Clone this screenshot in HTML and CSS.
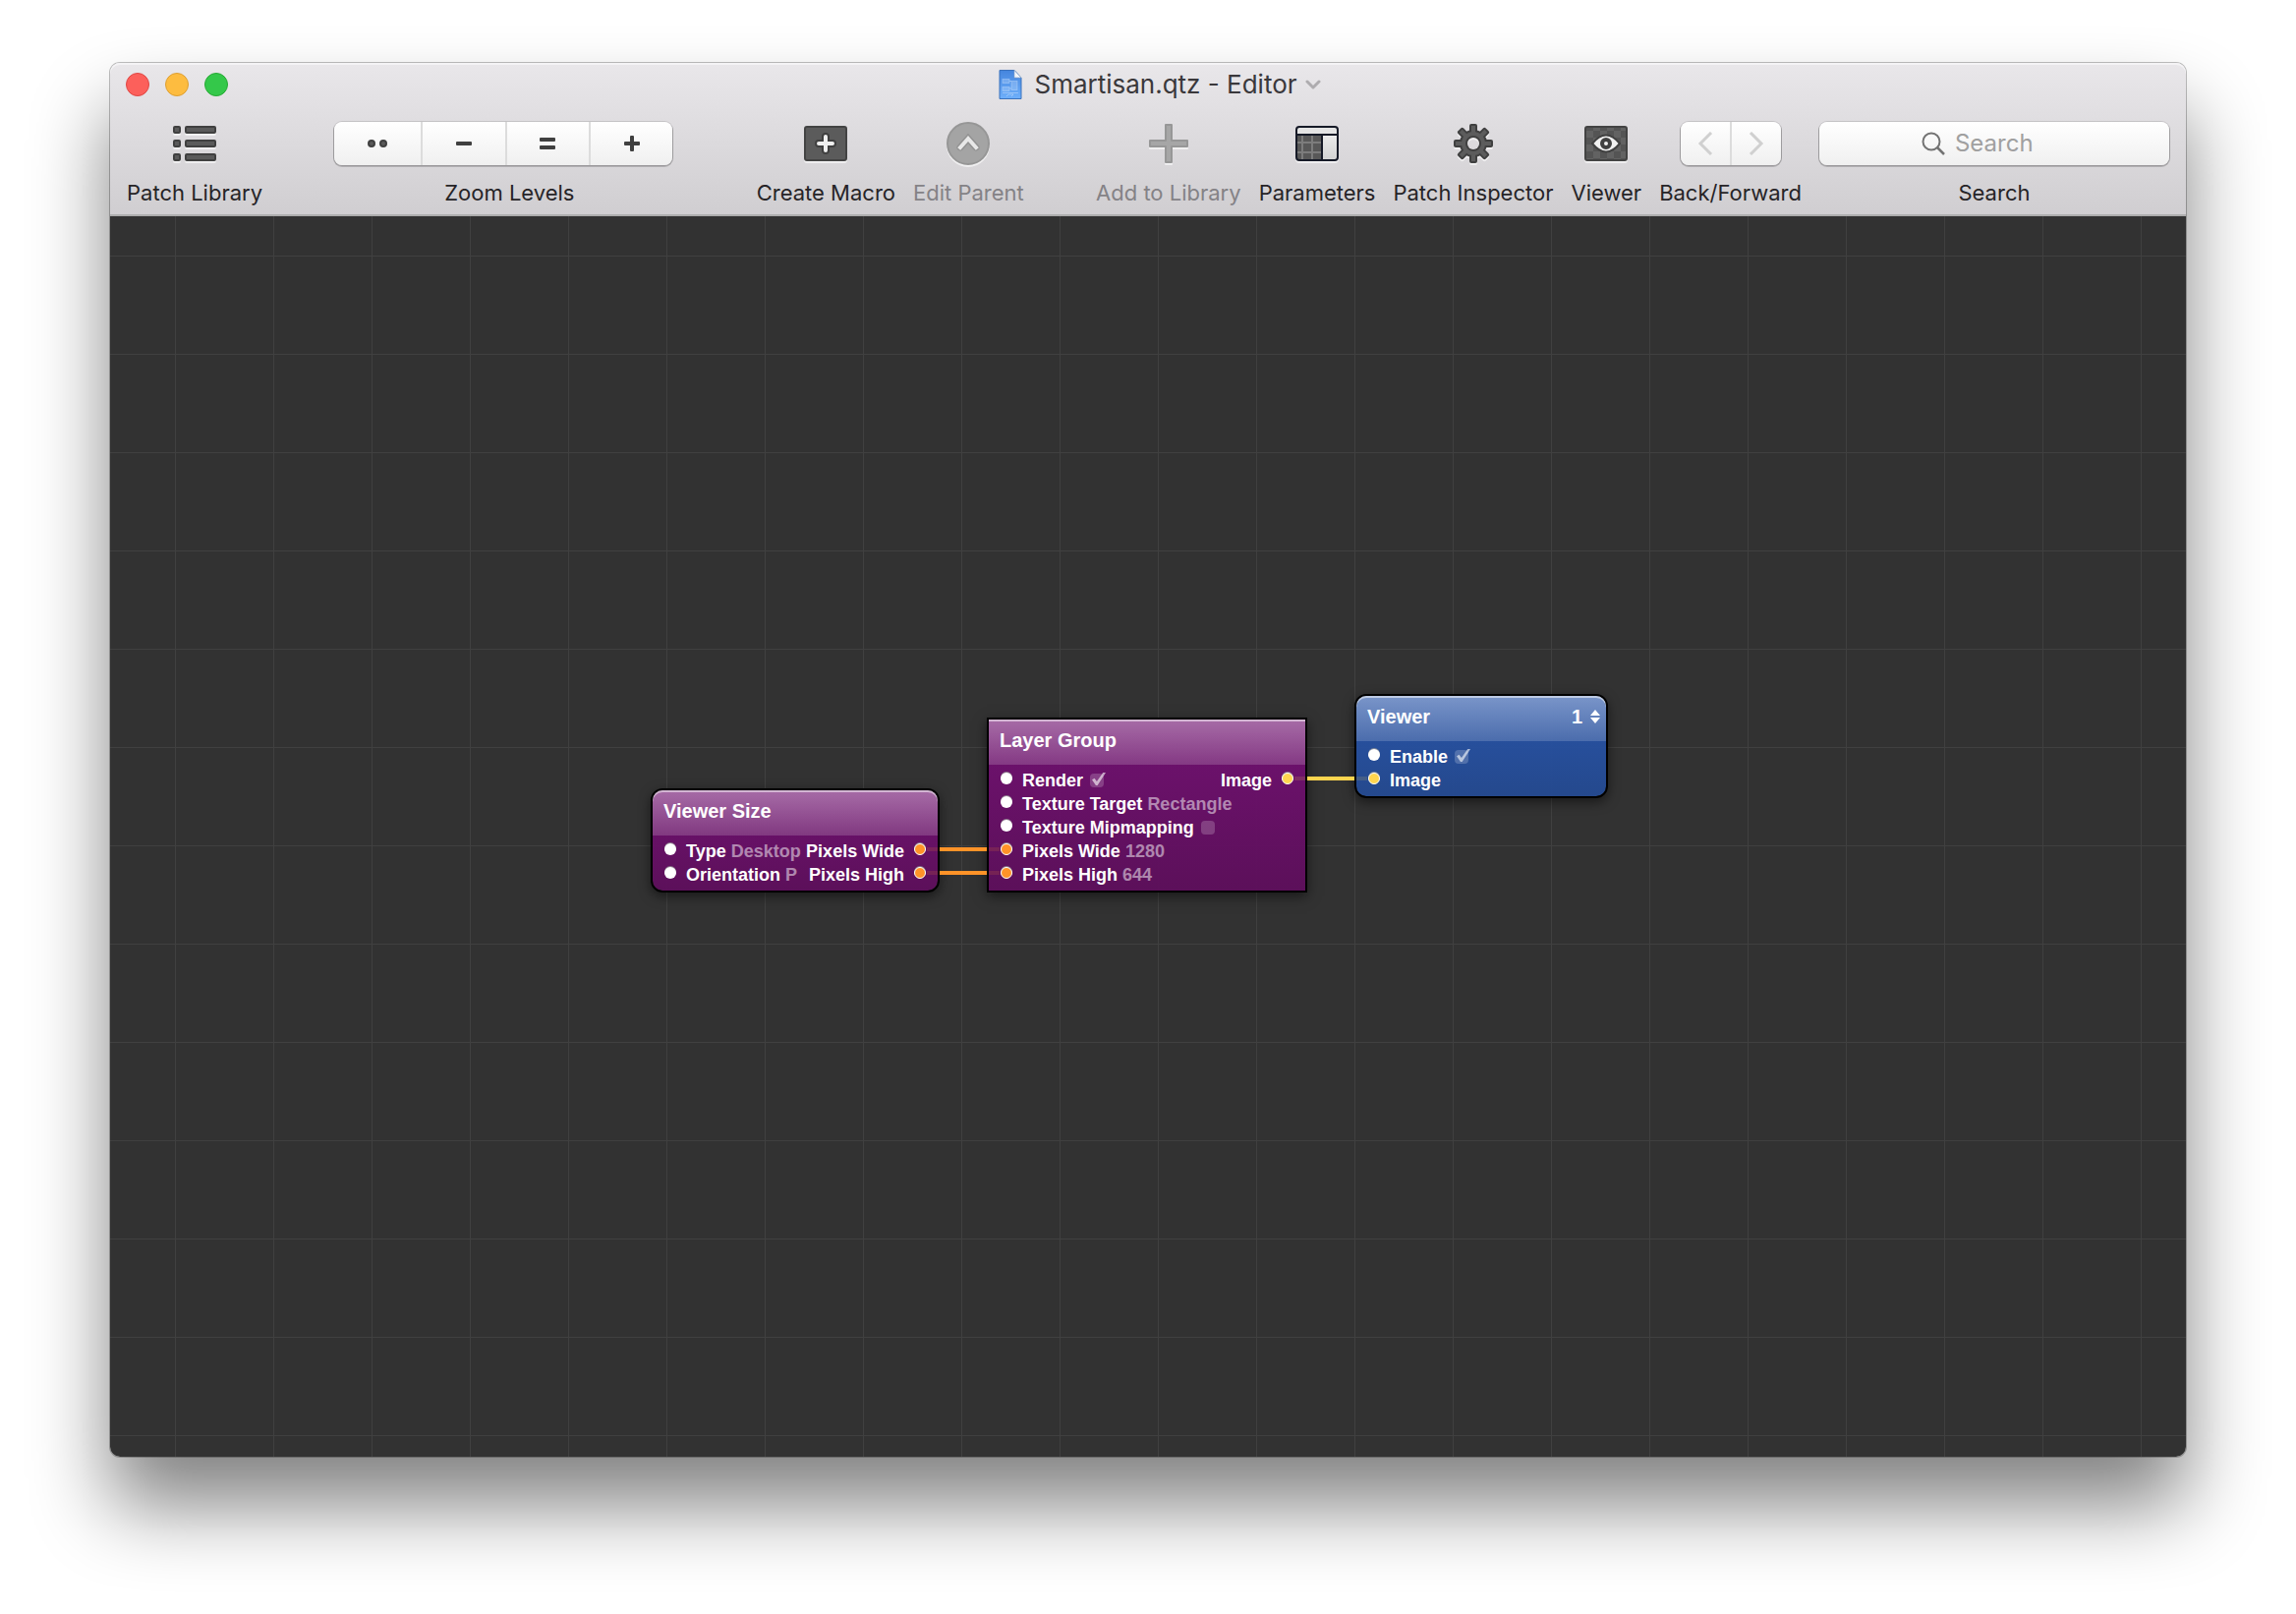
FILE: index.html
```html
<!DOCTYPE html>
<html lang="en">
<head>
<meta charset="utf-8">
<title>Smartisan.qtz - Editor</title>
<link rel="stylesheet" href="styles.css">
</head>
<body>
<main class="window">
  <header class="chrome">
    <div class="titlebar">
      <div class="lights">
        <button class="light light-close" aria-label="Close"></button>
        <button class="light light-min" aria-label="Minimize"></button>
        <button class="light light-max" aria-label="Zoom window"></button>
      </div>
      <h1 class="title">
        <svg width="24" height="32" viewBox="0 0 24 32" aria-hidden="true">
          <defs><linearGradient id="doc" x1="0" y1="0" x2="0" y2="1"><stop offset="0" stop-color="#4585de"/><stop offset="1" stop-color="#6fb0fb"/></linearGradient></defs>
          <path d="M1 1.500H16L23 9V30.500H1Z" fill="url(#doc)" stroke="#3b72bd"/>
          <path d="M16 1.500L23 9H16Z" fill="#f2f6fb" stroke="#8aa3c4" stroke-width=".6"/>
          <g fill="#b9d7fb" fill-opacity=".35" stroke="#cfe3fc" stroke-opacity=".45" stroke-width=".8"><rect x="4" y="10.500" width="7" height="4"/><rect x="4" y="18.500" width="7" height="4"/><rect x="13" y="12.500" width="6" height="9"/></g>
          <path d="M11 12.500H13M11 20H13M8 28L10 26H15L13 28M4 24.500H20" stroke="#c5defc" stroke-opacity=".5" fill="none"/>
        </svg>
        <span>Smartisan.qtz - Editor</span>
      </h1>
      <button class="title-menu" aria-label="Document menu">
        <svg width="16" height="12" viewBox="0 0 16 12"><path d="M2 3L8 9L14 3" fill="none" stroke="#aeacaf" stroke-width="3" stroke-linecap="round" stroke-linejoin="round"/></svg>
      </button>
    </div>

    <div class="toolbar">
      <button class="tool">
        <svg class="icon" width="44" height="44" viewBox="0 0 44 44" aria-hidden="true">
          <g fill="#5a5a5a" stroke="#404040" stroke-width="2"><rect x="1" y="5" width="6" height="6" rx="1"/><rect x="13" y="5" width="30" height="6" rx="1"/><rect x="1" y="19" width="6" height="6" rx="1"/><rect x="13" y="19" width="30" height="6" rx="1"/><rect x="1" y="33" width="6" height="6" rx="1"/><rect x="13" y="33" width="30" height="6" rx="1"/></g>
        </svg>
        <span>Patch Library</span>
      </button>

      <div class="tool tool-zoom spaced" role="group" aria-labelledby="zoom-label">
        <div class="segmented zoom">
          <button aria-label="Zoom to fit"><svg width="24" height="16" viewBox="0 0 24 16"><g fill="#5a5a5a" stroke="#404040" stroke-width="2"><circle cx="6" cy="8" r="3"/><circle cx="18" cy="8" r="3"/></g></svg></button>
          <button aria-label="Zoom out"><svg width="16" height="16" viewBox="0 0 16 16"><rect y="6" width="16" height="4" rx="1" fill="#404040"/></svg></button>
          <button aria-label="Actual size"><svg width="16" height="16" viewBox="0 0 16 16"><path d="M1 2h14a1 1 0 0 1 1 1v2a1 1 0 0 1-1 1H1a1 1 0 0 1-1-1V3a1 1 0 0 1 1-1zM1 10h14a1 1 0 0 1 1 1v2a1 1 0 0 1-1 1H1a1 1 0 0 1-1-1v-2a1 1 0 0 1 1-1z" fill="#404040"/></svg></button>
          <button aria-label="Zoom in"><svg width="16" height="16" viewBox="0 0 16 16"><rect y="6" width="16" height="4" rx="1" fill="#404040"/><rect x="6" width="4" height="16" rx="1" fill="#404040"/></svg></button>
        </div>
        <span id="zoom-label">Zoom Levels</span>
      </div>

      <button class="tool spaced">
        <svg class="icon" width="44" height="44" viewBox="0 0 44 44" aria-hidden="true">
          <rect x="1" y="5" width="42" height="34" rx="2" fill="#5b5b5b" stroke="#434343" stroke-width="2"/>
          <path d="M22 15V29M15 22H29" stroke="#404040" stroke-width="8" stroke-linecap="round"/>
          <path d="M22 15V29M15 22H29" stroke="#f0f0f0" stroke-width="4" stroke-linecap="round"/>
        </svg>
        <span>Create Macro</span>
      </button>
      <button class="tool" disabled>
        <svg class="icon" width="44" height="44" viewBox="0 0 44 44" aria-hidden="true">
          <circle cx="22" cy="22" r="21" fill="#a4a4a4" stroke="#969696" stroke-width="2"/>
          <path d="M14 26L22 17L30 26" fill="none" stroke="#929292" stroke-width="7" stroke-linecap="round"/>
          <path d="M14 26L22 17L30 26" fill="none" stroke="#e8e8e8" stroke-width="4" stroke-linecap="square"/>
        </svg>
        <span>Edit Parent</span>
      </button>

      <button class="tool spaced" disabled>
        <svg class="icon" width="40" height="44" viewBox="0 0 40 44" aria-hidden="true">
          <path d="M17 3H23V19H39V25H23V41H17V25H1V19H17Z" fill="#a6a6a6" stroke="#979797" stroke-width="2" stroke-linejoin="round"/>
        </svg>
        <span>Add to Library</span>
      </button>
      <button class="tool">
        <svg class="icon" width="44" height="44" viewBox="0 0 44 44" aria-hidden="true">
          <defs><linearGradient id="panel" x1="0" y1="0" x2="0" y2="1"><stop offset="0" stop-color="#f4f4f4"/><stop offset="1" stop-color="#d2d2d2"/></linearGradient></defs>
          <rect x="1" y="5" width="42" height="34" rx="3" fill="url(#panel)"/>
          <rect x="2" y="14" width="24" height="24" fill="#585858"/>
          <path d="M7 14V38M17 14V38M2 21H26M2 31H26" stroke="#7c7c7c" stroke-width="2"/>
          <rect x="2" y="6" width="40" height="7" fill="#e4e4e4"/>
          <path d="M2 13H42M27 13V38" stroke="#161a27" stroke-width="2"/>
          <rect x="1" y="5" width="42" height="34" rx="3" fill="none" stroke="#161a27" stroke-width="2"/>
        </svg>
        <span>Parameters</span>
      </button>
      <button class="tool">
        <svg class="icon" width="40" height="44" viewBox="-20 -22 40 44" aria-hidden="true">
          <defs>
            <g id="teeth"><rect x="-4" y="-20" width="8" height="40" rx="2"/><rect x="-20" y="-4" width="40" height="8" rx="2"/></g>
            <g id="teeth-in"><rect x="-2" y="-18" width="4" height="36"/><rect x="-18" y="-2" width="36" height="4"/></g>
            <mask id="hole"><rect x="-20" y="-22" width="40" height="44" fill="#fff"/><circle r="6" fill="#000"/></mask>
          </defs>
          <g mask="url(#hole)">
            <g fill="#404040"><use href="#teeth"/><use href="#teeth" transform="rotate(45)"/><circle r="14"/></g>
            <g fill="#5c5c5c"><use href="#teeth-in"/><use href="#teeth-in" transform="rotate(45)"/><circle r="12"/></g>
            <circle r="7" fill="none" stroke="#404040" stroke-width="2"/>
          </g>
        </svg>
        <span>Patch Inspector</span>
      </button>
      <button class="tool">
        <svg class="icon" width="44" height="44" viewBox="0 0 44 44" aria-hidden="true">
          <defs><pattern id="check" x="2" y="2" width="14" height="14" patternUnits="userSpaceOnUse"><rect width="14" height="14" fill="#626262"/><path d="M0 0h7v7H0zM7 7h7v7H7z" fill="#545454"/></pattern></defs>
          <rect x="1" y="5" width="42" height="34" rx="2" fill="url(#check)" stroke="#434343" stroke-width="2"/>
          <path d="M8 22Q22 5 36 22Q22 39 8 22Z" fill="#f0f0f0" stroke="#404040" stroke-width="2"/>
          <circle cx="22" cy="22" r="4" fill="#f0f0f0" stroke="#404040" stroke-width="4"/>
        </svg>
        <span>Viewer</span>
      </button>
      <div class="tool" role="group" aria-labelledby="nav-label">
        <div class="segmented nav">
          <button aria-label="Back" disabled><svg width="16" height="24" viewBox="0 0 16 24"><path d="M14 1L3 12L14 23" fill="none" stroke="#d0d0d0" stroke-width="3"/></svg></button>
          <button aria-label="Forward" disabled><svg width="16" height="24" viewBox="0 0 16 24"><path d="M2 1L13 12L2 23" fill="none" stroke="#d0d0d0" stroke-width="3"/></svg></button>
        </div>
        <span id="nav-label">Back/Forward</span>
      </div>
      <div class="tool tool-search">
        <div class="search">
          <svg width="24" height="24" viewBox="0 0 24 24" aria-hidden="true"><circle cx="10" cy="10" r="8.500" fill="none" stroke="#737373" stroke-width="2"/><path d="M16 16L23 23" stroke="#737373" stroke-width="2.500"/></svg>
          <input id="search" type="search" placeholder="Search">
        </div>
        <label for="search">Search</label>
      </div>
    </div>
  </header>

  <section class="canvas" aria-label="Patch canvas">
    <article class="node purple node-size">
      <h2>Viewer Size</h2>
      <ul>
        <li><i class="port"></i><span>Type</span><em>Desktop</em><span class="out">Pixels Wide</span><i class="port orange"></i></li>
        <li><i class="port"></i><span>Orientation</span><em>P</em><span class="out">Pixels High</span><i class="port orange"></i></li>
      </ul>
    </article>

    <article class="node purple square node-group">
      <h2>Layer Group</h2>
      <ul>
        <li><i class="port"></i><label for="render">Render</label><input id="render" type="checkbox" checked><span class="out">Image</span><i class="port yellow"></i></li>
        <li><i class="port"></i><span>Texture Target</span><em>Rectangle</em></li>
        <li><i class="port"></i><label for="mip">Texture Mipmapping</label><input id="mip" type="checkbox"></li>
        <li><i class="port orange"></i><span>Pixels Wide</span><em>1280</em></li>
        <li><i class="port orange"></i><span>Pixels High</span><em>644</em></li>
      </ul>
    </article>

    <article class="node blue node-viewer">
      <h2>Viewer<button class="layer" aria-label="Layer 1">1<svg width="10" height="14" viewBox="0 0 10 14"><path d="M5 0L10 6H0ZM5 14L0 8H10Z" fill="#fff"/></svg></button></h2>
      <ul>
        <li><i class="port"></i><label for="enable">Enable</label><input id="enable" type="checkbox" checked></li>
        <li><i class="port yellow"></i><span>Image</span></li>
      </ul>
    </article>

    <svg class="wires" aria-hidden="true">
      <g stroke-width="4">
        <path d="M844 644H892M844 668H892" stroke="#ff9328"/>
        <path d="M1218 572H1266" stroke="#ffd54f"/>
        <g opacity=".14">
          <path d="M831 644H842M831 668H842M894 644H905M894 668H905" stroke="#ff9328"/>
          <path d="M1205 572H1216M1268 572H1279" stroke="#ffd54f"/>
        </g>
      </g>
    </svg>
  </section>
</main>
</body>
</html>
```
FILE: styles.css
```css
* { box-sizing: border-box; }

body {
  margin: 0;
  min-height: 100vh;
  padding: 64px 112px 160px;
  display: flex;
  background: #fff;
  font-family: Inter, "Liberation Sans", sans-serif;
  color: #262427;
}

button {
  margin: 0;
  padding: 0;
  border: 0;
  background: none;
  font: inherit;
  color: inherit;
}

svg { display: block; }

/* Window */
.window {
  flex: 1;
  display: flex;
  flex-direction: column;
  border-radius: 10px;
  box-shadow: 0 0 0 1px rgba(0, 0, 0, .25), 0 50px 80px rgba(0, 0, 0, .49);
}

.chrome {
  border-radius: 10px 10px 0 0;
  border-bottom: 2px solid #adadad;
  padding-bottom: 6px;
  background: linear-gradient(#e9e7ea, #d0ced1);
  box-shadow: inset 0 2px 0 #f4f3f5;
}

.titlebar {
  height: 44px;
  padding: 0 16px;
  display: grid;
  grid-template-columns: 1fr auto 1fr;
  align-items: center;
}

.lights { display: flex; gap: 16px; }

.light {
  width: 24px;
  height: 24px;
  border-radius: 50%;
  border: 1px solid;
}
.light-close { background: #fc605b; border-color: #df4744; }
.light-min { background: #fdbc40; border-color: #dd9f33; }
.light-max { background: #34c84a; border-color: #27a934; }

.title {
  margin: 0;
  display: flex;
  align-items: center;
  gap: 12px;
  font-size: 26px;
  font-weight: 400;
  line-height: 32px;
  color: #3a383b;
}

.title-menu { margin-left: 8px; justify-self: start; }

/* Toolbar */
.toolbar {
  display: flex;
  gap: 18px;
  padding: 16px 17px 0;
}

.tool {
  display: flex;
  flex-direction: column;
  align-items: center;
  gap: 12px;
  font-size: 22px;
  line-height: 32px;
  white-space: nowrap;
}
.tool:disabled { color: #848286; }
.spaced { margin-left: auto; }
.tool-zoom,
.tool-search { width: 356px; }

.icon { filter: drop-shadow(0 2px 0 rgba(255, 255, 255, .6)); }

.segmented {
  display: flex;
  height: 44px;
  border-radius: 8px;
  background: linear-gradient(#fff, #f0f0f0);
  box-shadow: 0 0 0 1px rgba(0, 0, 0, .12), 0 1px 0 1px rgba(0, 0, 0, .18);
}
.segmented button {
  flex: 1;
  display: flex;
  align-items: center;
  justify-content: center;
}
.segmented button + button { border-left: 2px solid #dcdcdc; }
.segmented.zoom {
  width: 344px;
  align-self: flex-start;
}
.segmented.zoom button:first-child { min-width: 88px; }
.segmented.nav { width: 102px; }

.search {
  align-self: stretch;
  height: 44px;
  display: flex;
  align-items: center;
  justify-content: center;
  gap: 10px;
  border-radius: 8px;
  background: linear-gradient(#fff, #f0f0f0);
  box-shadow: 0 0 0 1px rgba(0, 0, 0, .12), 0 1px 0 1px rgba(0, 0, 0, .18);
}
.search input {
  width: 114px;
  height: 32px;
  padding: 0;
  border: 0;
  outline: 0;
  background: none;
  font: 24px/32px Inter, "Liberation Sans", sans-serif;
  appearance: none;
}
.search input::-webkit-search-cancel-button { display: none; }
.search input::placeholder { color: #a0a0a0; opacity: 1; }

/* Canvas */
.canvas {
  position: relative;
  flex: 1;
  overflow: hidden;
  border-radius: 0 0 10px 10px;
  background:
    linear-gradient(90deg, #404040 1px, transparent 1px) 66px 40px / 100px 100px,
    linear-gradient(#404040 1px, transparent 1px) 66px 40px / 100px 100px,
    #323232;
}

.wires {
  position: absolute;
  inset: 0;
  width: 100%;
  height: 100%;
  pointer-events: none;
}

.node {
  position: absolute;
  border: 2px solid #000;
  border-radius: 12px;
  background-clip: padding-box;
  box-shadow: 0 4px 12px rgba(0, 0, 0, .5);
  font: bold 18px/24px "Liberation Sans", sans-serif;
  color: #fff;
}
.square { border-radius: 0; }
.purple { background-image: linear-gradient(rgba(116, 16, 116, .95), rgba(94, 14, 92, .95)); }
.blue { background-image: linear-gradient(rgba(40, 86, 174, .95), rgba(36, 74, 146, .95)); }

.node-size { left: 550px; top: 582px; width: 294px; }
.node-group { left: 892px; top: 510px; width: 326px; }
.node-viewer { left: 1266px; top: 486px; width: 258px; }

.node h2 {
  height: 46px;
  margin: 0;
  padding: 0 6px 4px 11px;
  display: flex;
  align-items: center;
  justify-content: space-between;
  border-radius: 10px 10px 0 0;
  font-size: 20px;
  line-height: 24px;
  background: linear-gradient(rgba(255, 255, 255, .38), rgba(255, 255, 255, .17));
  box-shadow: inset 0 2px 0 rgba(255, 255, 255, .5);
}
.node.square h2 { border-radius: 0; }

.layer {
  display: flex;
  align-items: center;
  gap: 8px;
}

.node ul {
  margin: 0;
  padding: 2px 12px 6px;
  list-style: none;
}
.node li {
  height: 24px;
  display: flex;
  align-items: center;
  white-space: nowrap;
}
.node li > span,
.node li > label { padding-top: 3px; }
.node li .out { margin-left: auto; }

.port {
  width: 12px;
  height: 12px;
  border-radius: 50%;
  background: #fff;
  box-shadow: 0 -1px 0 rgba(150, 150, 150, .8);
  margin-right: 10px;
}
.out + .port { margin: 0 0 0 10px; }
.port.orange, .port.yellow { border: 1px solid #fff; }
.port.orange { background: #ff9328; }
.port.yellow { background: #ffd54f; }

.node em {
  padding: 3px 0 0 5px;
  font-style: normal;
  color: rgba(255, 255, 255, .5);
}

.node input {
  appearance: none;
  position: relative;
  width: 14px;
  height: 14px;
  margin: 4px 0 0 7px;
  border-radius: 4px;
  background: rgba(255, 255, 255, .2);
}
.node input:checked::after {
  content: "";
  position: absolute;
  inset: -1px -2px 2px 2px;
  background: rgba(255, 255, 255, .6);
  clip-path: polygon(0 55%, 18% 45%, 35% 70%, 80% 0, 100% 0, 40% 100%, 28% 100%);
}
```
